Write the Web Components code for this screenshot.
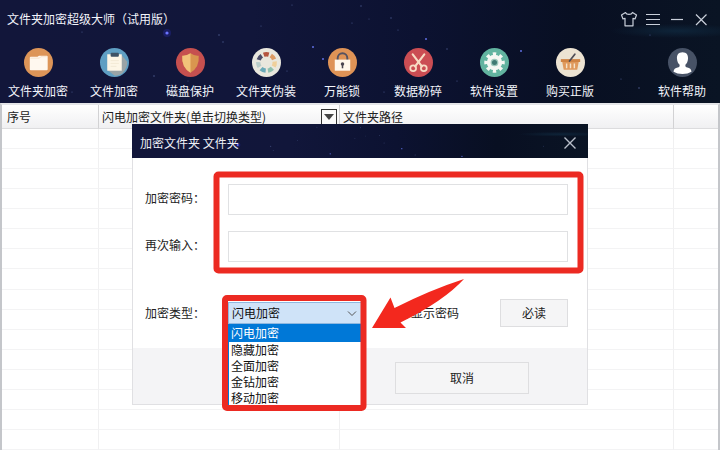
<!DOCTYPE html>
<html lang="zh-CN">
<head>
<meta charset="utf-8">
<meta name="viewport" content="width=device-width, initial-scale=1">
<title>文件夹加密超级大师</title>
<style>
  html, body {
    height: 100%;
    margin: 0;
    overflow: hidden;
  }
  body {
    font: 12px/16px "Noto Sans CJK SC", sans-serif;
    color: #222;
  }
</style>
</head>
<body>
<app-window>
  <title-bar slot="header">文件夹加密超级大师（试用版）</title-bar>
  <tool-bar slot="header">
    <tool-button icon="folder">文件夹加密</tool-button>
    <tool-button icon="clipboard">文件加密</tool-button>
    <tool-button icon="shield">磁盘保护</tool-button>
    <tool-button icon="palette">文件夹伪装</tool-button>
    <tool-button icon="lock">万能锁</tool-button>
    <tool-button icon="scissors">数据粉碎</tool-button>
    <tool-button icon="gear">软件设置</tool-button>
    <tool-button icon="basket">购买正版</tool-button>
    <tool-button icon="user" class="last">软件帮助</tool-button>
  </tool-bar>
  <file-grid></file-grid>
  <encrypt-dialog slot="dialog">加密文件夹 文件夹</encrypt-dialog>
</app-window>

<script>
const makeTemplate = (html) => {
  const template = document.createElement('template');
  template.innerHTML = html;
  return template;
};

// base class, clones the template of the subclass
class BaseElement extends HTMLElement {
  constructor () {
    super();
    this._shadowRoot = this.attachShadow({mode: 'open'});
    this._shadowRoot.appendChild(this.constructor.template.content.cloneNode(true));
  }
}

/**
 * @class StarField
 * night sky behind the header and the dialog caption
 */
class StarField extends BaseElement {
  static template = makeTemplate(`
<style>
  :host {
    position: absolute;
    inset: 0;
    overflow: hidden;
    background:
      radial-gradient(ellipse at 94% 30%, #0e2439 0, transparent 7%),
      linear-gradient(90deg, #12163a 0, #11163a 35%, #0c1231 58%, #080f22 80%, #0a1424 100%);
  }
  svg {
    display: block;
    width: 100%;
    height: 100%;
  }
</style>
<svg viewBox="0 0 720 103" preserveAspectRatio="xMidYMin slice" aria-hidden="true">
  <circle cx="167" cy="33" r="4" fill="#2b2fae" opacity=".35"/>
  <circle cx="167" cy="33" r="1.600" fill="#6a74ff"/>
  <g fill="#5f6ee0">
    <circle cx="313" cy="47" r="1"/><circle cx="323" cy="59" r="1"/>
    <circle cx="426" cy="39" r="1"/><circle cx="521" cy="51" r="1"/>
  </g>
  <g fill="#49578a">
    <circle cx="82" cy="32" r=".6"/><circle cx="154" cy="76" r=".8"/><circle cx="219" cy="35" r=".8"/>
    <circle cx="223" cy="42" r=".7"/><circle cx="261" cy="26" r=".6"/><circle cx="292" cy="5" r=".6"/>
    <circle cx="361" cy="6" r=".7"/><circle cx="352" cy="23" r=".6"/><circle cx="391" cy="18" r=".7"/>
    <circle cx="369" cy="19" r=".5"/><circle cx="398" cy="30" r=".6"/><circle cx="447" cy="49" r=".7"/>
    <circle cx="457" cy="81" r=".6"/><circle cx="384" cy="92" r=".6"/><circle cx="287" cy="71" r=".6"/>
    <circle cx="621" cy="79" r=".6"/><circle cx="639" cy="88" r=".8"/><circle cx="650" cy="35" r=".6"/>
    <circle cx="72" cy="92" r=".6"/><circle cx="188" cy="81" r=".5"/><circle cx="562" cy="95" r=".5"/>
  </g>
</svg>`);
}
customElements.define('star-field', StarField);

/**
 * @class AppWindow
 */
class AppWindow extends BaseElement {
  static template = makeTemplate(`
<style>
  :host {
    position: relative;
    display: flex;
    flex-direction: column;
    height: 100vh;
    overflow: hidden;
    background: #fff;
  }
  header {
    position: relative;
    isolation: isolate;
    color: #f2f4fa;
    padding-bottom: 4px;
  }
  star-field {
    z-index: -1;
  }
  main {
    flex: 1;
    min-height: 0;
    display: flex;
    border: 2px solid #c4c6ca;
    border-top-color: #e4e5e8;
    border-bottom: 0;
  }
  .layer {
    position: absolute;
    inset: 0;
    padding-top: 124px;
    display: flex;
    justify-content: center;
    align-items: flex-start;
  }
</style>
<header>
  <star-field></star-field>
  <slot name="header"></slot>
</header>
<main><slot></slot></main>
<div class="layer"><slot name="dialog"></slot></div>`);
}
customElements.define('app-window', AppWindow);

/**
 * @class TitleBar
 */
class TitleBar extends BaseElement {
  static template = makeTemplate(`
<style>
  :host {
    display: flex;
    align-items: center;
    justify-content: space-between;
    height: 38px;
    padding: 0 9px 0 7px;
  }
  nav {
    display: flex;
    gap: 4px;
  }
  button {
    display: flex;
    width: 20px;
    height: 20px;
    padding: 1px;
    border: 0;
    background: none;
    color: #c9cfda;
  }
  svg {
    width: 18px;
    height: 18px;
    fill: none;
    stroke: currentColor;
    stroke-width: 1.2;
  }
</style>
<span><slot></slot></span>
<nav>
  <button aria-label="皮肤"><svg viewBox="0 0 18 18"><path d="M5.500 2.500 1.500 5l1.500 4 2-.700V15.800h8V8.300l2 .700 1.500-4-4-2.500C11.500 5 6.500 5 5.500 2.500z" stroke-linejoin="round"/></svg></button>
  <button aria-label="菜单"><svg viewBox="0 0 18 18"><path d="M2 4.500h14M2 9.500h14M2 14.500h14"/></svg></button>
  <button aria-label="最小化"><svg viewBox="0 0 18 18"><path d="M3 9.500h12"/></svg></button>
  <button aria-label="关闭"><svg viewBox="0 0 18 18"><path d="M4 4.500 14.500 15M14.500 4.500 4 15"/></svg></button>
</nav>`);
}
customElements.define('title-bar', TitleBar);

/**
 * @class ToolBar
 */
class ToolBar extends BaseElement {
  static template = makeTemplate(`
<style>
  :host {
    display: flex;
    padding-top: 10px;
  }
  ::slotted(.last) {
    margin-left: auto;
  }
</style>
<slot></slot>`);
}
customElements.define('tool-bar', ToolBar);

const icons = {
  folder: `<circle cx="15" cy="15" r="15" fill="#dd9558"/>
    <path d="M6 10q0-1 1-1h7l1.500-1h8q1 0 1 1V22q0 1-1 1H7q-1 0-1-1z" fill="#fff8ef"/>
    <path d="M6.500 10.500H16l1.500-1.500h6" fill="none" stroke="#f3d9bd" stroke-width=".7"/>`,
  clipboard: `<circle cx="15" cy="15" r="15" fill="#5f9fc3"/>
    <path d="M8 7h14l6 7q1 6-5 12.500-4 2.500-8 2L8 23z" fill="#9aa4a6"/>
    <rect x="7.500" y="6.500" width="15" height="17" fill="#fdf6e6"/>
    <rect x="11" y="5" width="8.500" height="4" rx="1" fill="#3f5366"/>
    <path d="M11 13h8.500M11 16h8.500M11 19h6" stroke="#efe6d2" stroke-width=".8"/>`,
  shield: `<circle cx="15" cy="15" r="15" fill="#c6504f"/>
    <path d="M15 5.500q4 3 8.500 2.500 1 12-8.500 17.500Q5.500 20 6.500 8 11 8.500 15 5.500z" fill="#d9964f"/>
    <path d="M15 5.500Q11 8.500 6.500 8 5.500 20 15 25.500z" fill="#f2c27a"/>`,
  palette: `<circle cx="15" cy="15" r="15" fill="#e9e7dd"/>
    <g fill="none" stroke-width="4.500" transform="rotate(-110 15 15)">
      <circle cx="15" cy="15" r="8.500" stroke="#b5543f" pathLength="70" stroke-dasharray="7 63"/>
      <circle cx="15" cy="15" r="8.500" stroke="#dc9a62" pathLength="70" stroke-dasharray="7 63" stroke-dashoffset="-10"/>
      <circle cx="15" cy="15" r="8.500" stroke="#efcf9a" pathLength="70" stroke-dasharray="7 63" stroke-dashoffset="-20"/>
      <circle cx="15" cy="15" r="8.500" stroke="#8fc0ae" pathLength="70" stroke-dasharray="7 63" stroke-dashoffset="-30"/>
      <circle cx="15" cy="15" r="8.500" stroke="#6aaab8" pathLength="70" stroke-dasharray="7 63" stroke-dashoffset="-40"/>
      <circle cx="15" cy="15" r="8.500" stroke="#b9cdc9" pathLength="70" stroke-dasharray="7 63" stroke-dashoffset="-50"/>
      <circle cx="15" cy="15" r="8.500" stroke="#4b4c68" pathLength="70" stroke-dasharray="7 63" stroke-dashoffset="-60"/>
    </g>`,
  lock: `<circle cx="15" cy="15" r="15" fill="#df9356"/>
    <path d="M10 13v-2.500a5 5 0 0 1 10 0V13" fill="none" stroke="#565260" stroke-width="2"/>
    <rect x="7" y="12" width="16" height="11.500" fill="#fff8ec"/>
    <circle cx="15" cy="16.500" r="1.800" fill="#4a4650"/>
    <path d="M14.200 17h1.600v4h-1.600z" fill="#4a4650"/>`,
  scissors: `<circle cx="15" cy="15" r="15" fill="#cb4d53"/>
    <path d="M9 6.500 18.500 19M21 6.500 11.500 19" stroke="#f8dcc4" stroke-width="2.200" stroke-linecap="round"/>
    <g fill="none" stroke="#f8dcc4" stroke-width="1.800">
      <circle cx="9.500" cy="21" r="3"/><circle cx="20.500" cy="21" r="3"/>
    </g>`,
  gear: `<circle cx="15" cy="15" r="15" fill="#62b4a0"/>
    <circle cx="15" cy="15" r="8.800" fill="none" stroke="#f5f8f3" stroke-width="3.600" pathLength="80" stroke-dasharray="5 5" stroke-dashoffset="2.500"/>
    <circle cx="15" cy="15" r="6" fill="#9cc7ba" stroke="#f5f8f3" stroke-width="4"/>
    <circle cx="15" cy="15" r="2.600" fill="#3f7a72"/>`,
  basket: `<circle cx="15" cy="15" r="15" fill="#ece3d2"/>
    <path d="M5 11.500h20v3H5z" fill="#d08444"/>
    <path d="M6.500 14.500h17L22 22.500H8z" fill="#df995c"/>
    <path d="M11 16v5M15 16v5M19 16v5" stroke="#f5e3cb" stroke-width="1.500"/>
    <path d="M19.500 6.500 14 13.500" stroke="#4f4d55" stroke-width="1.800" stroke-linecap="round"/>`,
  user: `<circle cx="15" cy="15" r="15" fill="#475266"/>
    <path d="M15 4.500c4.200 0 6 3 5.700 6.500-.2 3-1.400 5-2.700 6.200-.3 1.800.5 2.600 2 3.100 2.500.8 4 1.500 4.300 4.200Q20.500 27 15 27t-9.300-2.500C6 21.800 7.500 21.100 10 20.300c1.500-.5 2.300-1.300 2-3.100C10.700 16 9.500 14 9.300 11 9 7.500 10.800 4.500 15 4.500z" fill="#fff"/>`
};

/**
 * @class ToolButton
 */
class ToolButton extends BaseElement {
  static template = makeTemplate(`
<style>
  :host {
    display: block;
    flex: 0 1 76px;
  }
  button {
    display: flex;
    flex-direction: column;
    align-items: center;
    gap: 6px;
    width: 100%;
    padding: 0;
    border: 0;
    background: none;
    color: inherit;
    font: inherit;
    white-space: nowrap;
  }
  svg {
    width: 29px;
    height: 29px;
  }
</style>
<button>
  <svg viewBox="0 0 30 30" aria-hidden="true"></svg>
  <span><slot></slot></span>
</button>`);
  /**
   * @function connectedCallback
   * @returns {void}
   */
  connectedCallback () {
    this._shadowRoot.querySelector('svg').innerHTML = icons[this.getAttribute('icon')];
  }
}
customElements.define('tool-button', ToolButton);

/**
 * @class FileGrid
 */
class FileGrid extends BaseElement {
  static template = makeTemplate(`
<style>
  :host {
    display: flex;
    flex: 1;
    min-width: 0;
  }
  table {
    flex: 1;
    width: 100%;
    height: 100%;
    table-layout: fixed;
    border-collapse: separate;
    border-spacing: 0;
  }
  th, td {
    padding: 0 0 0 3px;
    border-right: 1px solid #f0f0f1;
    border-bottom: 1px solid #f3f3f4;
  }
  th {
    height: 23px;
    border-right-color: #d2d2d4;
    border-bottom-color: #dcdcde;
    background: linear-gradient(#fff, #f0f0f2);
    font-weight: normal;
    text-align: left;
    white-space: nowrap;
  }
  th:first-child {
    padding-left: 5px;
  }
  th:last-child, td:last-child {
    border-right: 0;
  }
  .no { width: 91px; }
  .type { width: 237px; }
  .end { width: 41px; }
  .split {
    display: flex;
    align-items: center;
    justify-content: space-between;
    padding-right: 2px;
  }
  button {
    width: 16px;
    height: 16px;
    padding: 0;
    border: 1px solid #333;
    background: #fafafa;
    display: grid;
    place-items: center;
  }
  button::before {
    content: "";
    border: 5px solid transparent;
    border-top: 6px solid #444;
    border-bottom: 0;
  }
</style>
<table>
  <thead>
    <tr>
      <th class="no">序号</th>
      <th class="type"><div class="split"><span>闪电加密文件夹(单击切换类型)</span><button aria-label="切换类型"></button></div></th>
      <th>文件夹路径</th>
      <th class="end"></th>
    </tr>
  </thead>
  <tbody></tbody>
</table>`);
  constructor () {
    super();
    this._shadowRoot.querySelector('tbody').innerHTML =
      '<tr><td></td><td></td><td></td><td></td></tr>'.repeat(16);
  }
}
customElements.define('file-grid', FileGrid);

/**
 * @class TypePicker
 * drop-down with its list unfolded
 */
class TypePicker extends BaseElement {
  static template = makeTemplate(`
<style>
  :host {
    display: block;
    position: relative;
    width: 134px;
    color: #111;
  }
  select {
    display: block;
    appearance: none;
    width: 100%;
    height: 22px;
    padding: 0 3px;
    border: 1px solid #8fb8e0;
    border-radius: 0;
    background: #cfe3f8;
    color: inherit;
    font: inherit;
    outline: 0;
  }
  svg {
    position: absolute;
    right: 5px;
    top: 8px;
    width: 10px;
    height: 7px;
    fill: none;
    stroke: #555;
    pointer-events: none;
  }
  ul {
    position: absolute;
    z-index: 1;
    top: 100%;
    left: 0;
    right: 0;
    height: 81px;
    box-sizing: border-box;
    margin: 0;
    padding: 0;
    overflow: hidden;
    border: 1px solid #0078d7;
    border-bottom: 0;
    background: #fff;
    list-style: none;
  }
  li {
    padding: 0 2px;
  }
  li[aria-selected="true"] {
    padding-bottom: 1px;
    background: #0078d7;
    color: #fff;
  }
</style>
<select id="type" aria-label="加密类型"></select>
<svg viewBox="0 0 10 7" aria-hidden="true"><path d="M1 1.500 5 5.500 9 1.500"/></svg>
<ul role="listbox"></ul>`);
  constructor () {
    super();
    this.$select = this._shadowRoot.querySelector('select');
    this.$list = this._shadowRoot.querySelector('ul');
  }
  /**
   * @function connectedCallback
   * @returns {void}
   */
  connectedCallback () {
    const types = this.getAttribute('types').split(' ');
    this.$select.innerHTML = types.map((t) => `<option>${t}</option>`).join('');
    this.$list.innerHTML = types.map((t, i) => `<li role="option" aria-selected="${i === 0}">${t}</li>`).join('');
    this.$list.addEventListener('click', (ev) => {
      if (ev.target.nodeName !== 'LI') return;
      this.$select.value = ev.target.textContent;
      this.$list.querySelectorAll('li').forEach((li) => {
        li.setAttribute('aria-selected', li === ev.target);
      });
    });
  }
}
customElements.define('type-picker', TypePicker);

/**
 * @class HintMarks
 * red frames and the arrow drawn over the dialog
 */
class HintMarks extends BaseElement {
  static template = makeTemplate(`
<style>
  :host {
    position: absolute;
    z-index: 2;
    inset: 0;
    pointer-events: none;
  }
  svg {
    display: block;
    width: 456px;
    height: 290px;
  }
</style>
<svg viewBox="132 124 456 290" aria-hidden="true">
  <g fill="none" stroke="#ec2a22" stroke-width="6">
    <rect x="216.500" y="174.500" width="364" height="96" rx="2"/>
    <rect x="225" y="298" width="138.500" height="110" rx="2"/>
  </g>
  <path d="M372 328 390.500 297.500 394.500 308Q430 290 464 279 444 301 400.500 322.500L406 328z" fill="#f3281e"/>
</svg>`);
}
customElements.define('hint-marks', HintMarks);

/**
 * @class EncryptDialog
 */
class EncryptDialog extends BaseElement {
  static template = makeTemplate(`
<style>
  :host {
    position: relative;
    display: block;
    width: 456px;
    background: #fff;
  }
  header {
    position: relative;
    isolation: isolate;
    display: flex;
    align-items: center;
    justify-content: space-between;
    height: 34px;
    padding: 3px 9px 0 8px;
    box-sizing: border-box;
    color: #eef0f6;
  }
  star-field {
    z-index: -1;
  }
  .close {
    display: flex;
    padding: 1px;
    border: 0;
    background: none;
    color: #b9bfca;
  }
  .close svg {
    width: 16px;
    height: 16px;
    fill: none;
    stroke: currentColor;
    stroke-width: 1.4;
  }
  form {
    border: 1px solid #e0e0e3;
    border-top: 0;
  }
  .fields {
    display: grid;
    grid-template-columns: 83px 1fr;
    row-gap: 16px;
    align-items: center;
    padding: 26px 19px 21px 12px;
  }
  .fields > label {
    padding-bottom: 3px;
  }
  input[type="password"] {
    box-sizing: border-box;
    width: 100%;
    height: 31px;
    padding: 0 8px;
    border: 1px solid #e0e1e3;
    background: #fff;
    font: inherit;
  }
  .options {
    margin-top: 21px;
  }
  .row {
    display: flex;
    align-items: center;
    justify-content: space-between;
  }
  .check {
    display: flex;
    align-items: center;
    gap: 3px;
    padding-right: 7px;
  }
  .check input {
    appearance: none;
    width: 12px;
    height: 12px;
    margin: 0;
    border: 1px solid #aaa;
    background: #fff;
  }
  .btn {
    width: 68px;
    height: 28px;
    padding: 0;
    border: 1px solid #dedee0;
    background: #f5f5f6;
    color: inherit;
    font: inherit;
  }
  footer {
    display: flex;
    justify-content: flex-end;
    padding: 14px 58px 10px;
    background: #f4f4f6;
  }
  footer .btn {
    width: 134px;
    height: 32px;
  }
</style>
<header>
  <star-field></star-field>
  <span><slot></slot></span>
  <button class="close" aria-label="关闭"><svg viewBox="0 0 16 16"><path d="M2.500 2.500 13.500 13.500M13.500 2.500 2.500 13.500"/></svg></button>
</header>
<form>
  <div class="fields">
    <label for="pwd">加密密码：</label>
    <input type="password" id="pwd">
    <label for="again">再次输入：</label>
    <input type="password" id="again">
    <span class="options">加密类型：</span>
    <div class="row options">
      <type-picker types="闪电加密 隐藏加密 全面加密 金钻加密 移动加密"></type-picker>
      <label class="check"><input type="checkbox">显示密码</label>
      <button type="button" class="btn">必读</button>
    </div>
  </div>
  <footer><button type="button" class="btn">取消</button></footer>
</form>
<hint-marks></hint-marks>`);
}
customElements.define('encrypt-dialog', EncryptDialog);
</script>
</body>
</html>
